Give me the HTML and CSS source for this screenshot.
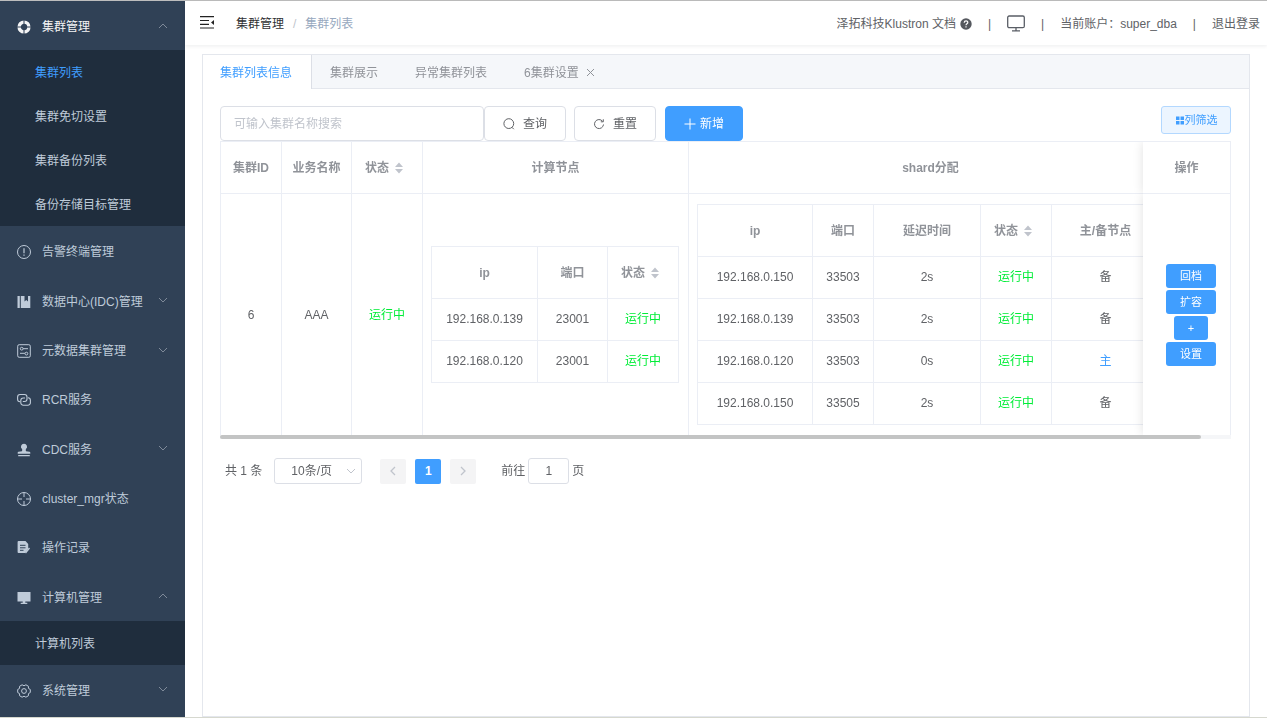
FILE: index.html
```html
<!DOCTYPE html>
<html lang="zh-CN">
<head>
<meta charset="utf-8">
<title>集群列表</title>
<link rel="stylesheet" href="styles.css">
</head>
<body>
<svg class="defs" aria-hidden="true">
  <symbol id="up" viewBox="0 0 10 10"><path d="M1 7l4-4 4 4" fill="none" stroke="currentColor"/></symbol>
  <symbol id="down" viewBox="0 0 10 10"><path d="M1 3l4 4 4-4" fill="none" stroke="currentColor"/></symbol>
  <symbol id="sort" viewBox="0 0 10 14"><path d="M5 1.500l4 4.500H1zM5 12.500l4-4.500H1z" fill="#c0c4cc"/></symbol>
</svg>
<div class="app">
  <nav class="sidebar" aria-label="主菜单">
    <ul class="menu">
      <li class="group">
        <a class="title open" href="#">
          <svg class="icon" viewBox="0 0 14 14"><circle cx="7" cy="7" r="4.900" fill="none" stroke="currentColor" stroke-width="3.400"/><path d="M7 0v4.500M7 9.500v4.500M0 7h4.500M9.500 7H14" stroke="#304156" stroke-width="1"/></svg>
          <span>集群管理</span><svg class="chevron"><use href="#up"/></svg></a>
        <ul class="submenu">
          <li><a class="active" href="#">集群列表</a></li>
          <li><a href="#">集群免切设置</a></li>
          <li><a href="#">集群备份列表</a></li>
          <li><a href="#">备份存储目标管理</a></li>
        </ul>
      </li>
      <li class="group"><a class="title" href="#">
        <svg class="icon" viewBox="0 0 14 14" fill="none" stroke="currentColor"><circle cx="7" cy="7" r="6.500"/><path d="M7 3.200v5" stroke-width="1.200"/><path d="M7 9.500v1.200" stroke-width="1.200"/></svg>
        <span>告警终端管理</span></a></li>
      <li class="group"><a class="title" href="#">
        <svg class="icon" viewBox="0 0 14 14" fill="currentColor"><path d="M.5 1h2.300v12H.5zM3.800 1h3.700v5.500l1.700-1.600L11 6.500V1h2.300v12H3.800z"/></svg>
        <span>数据中心(IDC)管理</span><svg class="chevron"><use href="#down"/></svg></a></li>
      <li class="group"><a class="title" href="#">
        <svg class="icon" viewBox="0 0 14 14" fill="none" stroke="currentColor"><rect x=".7" y=".7" width="12.600" height="12.600" rx="1.500"/><circle cx="4.700" cy="4.700" r="1.400"/><path d="M6.100 4.700H11M3 9.300h4.900"/><circle cx="9.400" cy="9.600" r="1.400"/></svg>
        <span>元数据集群管理</span><svg class="chevron"><use href="#down"/></svg></a></li>
      <li class="group"><a class="title" href="#">
        <svg class="icon" viewBox="0 0 14 14" fill="none" stroke="currentColor" stroke-width="1.100"><path d="M3 8.700A2.500 2.500 0 0 1 .6 6.200V4A2.500 2.500 0 0 1 3 1.500h4.500A2.500 2.500 0 0 1 10 4v2a2.500 2.500 0 0 1-2.500 2.500H5.800"/><path d="M11 4.800A2.500 2.500 0 0 1 13.400 7.300v2.400a2.500 2.500 0 0 1-2.500 2.500H6.300a2.500 2.500 0 0 1-2.500-2.500V7.500a2.500 2.500 0 0 1 2.500-2.500H8"/></svg>
        <span>RCR服务</span></a></li>
      <li class="group"><a class="title" href="#">
        <svg class="icon" viewBox="0 0 14 14" fill="currentColor"><path d="M7 .8a3 3 0 0 1 2 5.300c-.4.500-.3 1.500.1 2.200l3.400.5a1 1 0 0 1 .8 1v1H.7v-1a1 1 0 0 1 .8-1l3.400-.5c.4-.7.500-1.700.1-2.200A3 3 0 0 1 7 .8zM1.200 12h11.600v1.200H1.200z"/></svg>
        <span>CDC服务</span><svg class="chevron"><use href="#down"/></svg></a></li>
      <li class="group"><a class="title" href="#">
        <svg class="icon" viewBox="0 0 14 14" fill="none" stroke="currentColor"><circle cx="7" cy="7" r="6.500"/><path d="M7 .5V5M7 9v4.500M.5 7H5M9 7h4.500"/></svg>
        <span>cluster_mgr状态</span></a></li>
      <li class="group"><a class="title" href="#">
        <svg class="icon" viewBox="0 0 14 14"><path d="M1.500 0h7l2.700 3v5L8 12H1.500A1 1 0 0 1 .6 11V1a1 1 0 0 1 .9-1z" fill="currentColor"/><path d="M3 4.300h5.500M3 6.800h5.500M3 9.300h3.500" stroke="#304156"/><path d="M12.500 7l-4 5" stroke="currentColor" stroke-width="1.300"/></svg>
        <span>操作记录</span></a></li>
      <li class="group">
        <a class="title" href="#">
          <svg class="icon" viewBox="0 0 14 14" fill="currentColor"><path d="M.5 1h13v9.500H.5zM5.700 10.500h2.600v1.300h2v1.100H3.700v-1.100h2z"/></svg>
          <span>计算机管理</span><svg class="chevron"><use href="#up"/></svg></a>
        <ul class="submenu"><li><a href="#">计算机列表</a></li></ul>
      </li>
      <li class="group"><a class="title" href="#">
        <svg class="icon" viewBox="0 0 14 14" fill="none" stroke="currentColor"><path d="M5.100.8Q7 2.800 8.900.8L11.400 2.250Q10.600 4.900 13.300 5.500V8.500Q10.600 9.100 11.400 11.750L8.900 13.200Q7 11.200 5.100 13.200L2.600 11.750Q3.400 9.100.7 8.500V5.500Q3.400 4.900 2.600 2.250z" stroke-linejoin="round"/><circle cx="7" cy="7" r="2.400"/></svg>
        <span>系统管理</span><svg class="chevron"><use href="#down"/></svg></a></li>
    </ul>
  </nav>

  <div class="page">
    <header class="topbar">
      <button class="fold" aria-label="收起菜单"><svg viewBox="0 0 14 13" width="14" height="13" stroke="#222" stroke-width="1.200"><path d="M0 .7h14M0 4.500h9M0 8.300h9M0 12h14"/><path d="M14 4v5l-3-2.500z" fill="#222" stroke="none"/></svg></button>
      <nav class="crumbs" aria-label="位置"><a href="#">集群管理</a><span class="slash">/</span><span class="here">集群列表</span></nav>
      <div class="tools">
        <a class="docs" href="#">泽拓科技Klustron 文档 <svg width="12" height="12" viewBox="0 0 12 12"><circle cx="6" cy="6" r="5.700" fill="#55585e"/><path d="M4.200 4.700C4.300 2.300 7.800 2.400 7.800 4.500 7.800 5.800 6 5.800 6 7.200M6 8.200v1.300" fill="none" stroke="#fff" stroke-width="1.200"/></svg></a>
        <span>|</span>
        <a class="screen" href="#" aria-label="大屏"><svg width="18" height="17" viewBox="0 0 18 17" fill="none" stroke="#5a5e66" stroke-width="1.300"><rect x=".7" y="1" width="16.600" height="11.700" rx="1.500"/><path d="M9 13v2.500M5 15.800h8"/></svg></a>
        <span>|</span>
        <span>当前账户：super_dba</span>
        <span>|</span>
        <a href="#">退出登录</a>
      </div>
    </header>

    <main class="main">
      <section class="card">
        <div class="tabs" role="tablist">
          <button class="tab current" role="tab" aria-selected="true">集群列表信息</button>
          <button class="tab" role="tab">集群展示</button>
          <button class="tab" role="tab">异常集群列表</button>
          <button class="tab" role="tab">6集群设置<svg width="9" height="9" viewBox="0 0 9 9" stroke="currentColor"><path d="M1 1l7 7M8 1L1 8"/></svg></button>
        </div>
        <div class="body">
          <div class="toolbar">
            <input class="search" type="text" placeholder="可输入集群名称搜索" aria-label="集群名称">
            <button class="btn"><svg width="12" height="12" viewBox="0 0 12 12" fill="none" stroke="currentColor"><circle cx="5.800" cy="5.600" r="4.900"/><path d="M8.800 9.200l2 2"/></svg>查询</button>
            <button class="btn reset"><svg width="12" height="12" viewBox="0 0 12 12" fill="none" stroke="currentColor"><path d="M10.500 6.500A4.500 4.500 0 1 1 9.500 3.200M10.300 1.300v2.500H7.800"/></svg>重置</button>
            <button class="btn primary"><svg width="12" height="12" viewBox="0 0 12 12" stroke="currentColor"><path d="M6 .5v11M.5 6h11"/></svg>新增</button>
            <button class="filter"><svg width="10" height="9" viewBox="0 0 10 9" fill="currentColor"><path d="M1 .5h3.500V4H1zM5.500 .5H9V4H5.500zM1 5h3.500v3.500H1zM5.500 5H9v3.500H5.500z"/></svg>列筛选</button>
          </div>

          <div class="scroller">
            <table class="grid outer">
              <colgroup><col class="w61"><col class="w70"><col class="w71"><col class="w266"><col class="w484"><col class="w88"></colgroup>
              <thead><tr><th>集群ID</th><th>业务名称</th><th>状态<svg class="sort"><use href="#sort"/></svg></th><th>计算节点</th><th>shard分配</th><th class="fixed">操作</th></tr></thead>
              <tbody><tr>
                <td>6</td><td>AAA</td><td class="ok">运行中</td>
                <td class="nest">
                  <table class="grid inner">
                    <colgroup><col class="w106"><col class="w70"><col class="w71"></colgroup>
                    <thead><tr><th>ip</th><th>端口</th><th>状态<svg class="sort"><use href="#sort"/></svg></th></tr></thead>
                    <tbody>
                      <tr><td>192.168.0.139</td><td>23001</td><td class="ok">运行中</td></tr>
                      <tr><td>192.168.0.120</td><td>23001</td><td class="ok">运行中</td></tr>
                    </tbody>
                  </table>
                </td>
                <td class="nest">
                  <table class="grid inner">
                    <colgroup><col class="w115"><col class="w61"><col class="w107"><col class="w71"><col class="w108"></colgroup>
                    <thead><tr><th>ip</th><th>端口</th><th>延迟时间</th><th>状态<svg class="sort"><use href="#sort"/></svg></th><th>主/备节点</th></tr></thead>
                    <tbody>
                      <tr><td>192.168.0.150</td><td>33503</td><td>2s</td><td class="ok">运行中</td><td>备</td></tr>
                      <tr><td>192.168.0.139</td><td>33503</td><td>2s</td><td class="ok">运行中</td><td>备</td></tr>
                      <tr><td>192.168.0.120</td><td>33503</td><td>0s</td><td class="ok">运行中</td><td class="master">主</td></tr>
                      <tr><td>192.168.0.150</td><td>33505</td><td>2s</td><td class="ok">运行中</td><td>备</td></tr>
                    </tbody>
                  </table>
                </td>
                <td class="fixed"><div class="actions"><button>回档</button><button>扩容</button><button>+</button><button>设置</button></div></td>
              </tr></tbody>
            </table>
          </div>
          <div class="track"><div class="thumb"></div></div>

          <div class="pager">
            <span class="total">共 1 条</span>
            <span class="size"><select aria-label="每页条数"><option>10条/页</option></select><svg class="arrow"><use href="#down"/></svg></span>
            <div class="pages">
              <button aria-label="上一页"><svg width="10" height="10" viewBox="0 0 10 10" fill="none" stroke="#c0c4cc" stroke-width="1.300"><path d="M7 1L3 5l4 4"/></svg></button>
              <button class="on">1</button>
              <button aria-label="下一页"><svg width="10" height="10" viewBox="0 0 10 10" fill="none" stroke="#c0c4cc" stroke-width="1.300"><path d="M3 1l4 4-4 4"/></svg></button>
            </div>
            <label class="jump">前往<input type="text" value="1">页</label>
          </div>
        </div>
      </section>
    </main>
  </div>
</div>
</body>
</html>
```
FILE: styles.css
```css
* { box-sizing: border-box; }

body {
  margin: 0;
  font: 12px/16px "Liberation Sans", "Noto Sans CJK SC", sans-serif;
  color: #606266;
  background: #fff;
}

button, input, select { font: inherit; color: inherit; margin: 0; }
button { cursor: pointer; }
a { color: inherit; text-decoration: none; }
ul { list-style: none; margin: 0; padding: 0; }
svg { flex: none; }
.defs { display: none; }

.app {
  display: flex;
  min-height: 100vh;
  border-top: 1px solid #bdbdbd;
  border-bottom: 1px solid #d6d8cf;
}

/* Sidebar */
.sidebar {
  display: flex;
  width: 185px;
  flex: none;
  padding-bottom: 3px;
  background: #304156;
  color: #bfcbd9;
}
.menu { display: flex; flex-direction: column; flex: 1; }
.group { display: flex; flex-direction: column; flex: 1 0 auto; }
.title {
  display: flex;
  align-items: center;
  flex: 1 0 auto;
  min-height: 49px;
  padding: 3px 17px 0;
}
.title.open { color: #f4f4f5; }
.title .icon { width: 14px; height: 14px; margin-right: 11px; }
.chevron { width: 10px; height: 10px; margin: 0 0 3px auto; color: #7f8a99; }
.submenu { background: #1f2d3d; }
.submenu a { display: block; padding: 3px 35px 0; line-height: 41px; }
.submenu .active { color: #409eff; }

/* Top bar */
.page { display: flex; flex-direction: column; flex: 1; min-width: 0; }
.topbar {
  display: flex;
  align-items: center;
  height: 44px;
  padding: 0 7px 0 15px;
  box-shadow: 0 1px 4px rgba(0, 21, 41, .08);
}
.fold { display: flex; padding: 0; border: 0; background: none; margin: 0 22px 2px 0; }
.crumbs { display: flex; gap: 9px; padding-top: 2px; color: #303133; }
.slash { color: #c0c4cc; }
.here { color: #97a8be; }
.tools { display: flex; align-items: center; gap: 16px; padding-top: 2px; margin-left: auto; }
.docs { display: flex; align-items: center; gap: 4px; }
.screen { display: flex; padding-bottom: 2px; }

/* Card and tabs */
.main { display: flex; flex: 1; padding: 9px 17px 0; }
.card { flex: 1; min-width: 0; border: 1px solid #e4e7ed; }
.tabs { display: flex; background: #f5f7fa; border-bottom: 1px solid #e4e7ed; }
.tab {
  display: flex;
  align-items: center;
  gap: 7px;
  height: 33px;
  padding: 2px 19px 0 18px;
  border: 0;
  background: none;
  color: #909399;
}
.tab.current {
  height: 34px;
  margin-bottom: -1px;
  padding: 1px 19px 0 17px;
  background: #fff;
  color: #409eff;
  border-right: 1px solid #dcdfe6;
}
.body { padding: 17px 18px 17px 17px; }

/* Toolbar */
.toolbar { display: flex; }
.search {
  width: 264px;
  height: 35px;
  padding: 0 13px;
  border: 1px solid #dcdfe6;
  border-radius: 4px;
  outline: 0;
}
.search::placeholder { color: #c0c4cc; }
.btn {
  display: flex;
  align-items: center;
  justify-content: center;
  gap: 8px;
  width: 82px;
  height: 35px;
  padding: 0;
  border: 1px solid #dcdfe6;
  border-radius: 4px;
  background: #fff;
}
.btn.reset { margin: 0 9px 0 8px; }
.btn.primary { width: 78px; gap: 4px; color: #fff; background: #409eff; border-color: #409eff; }
.filter {
  display: flex;
  align-items: center;
  justify-content: center;
  width: 70px;
  height: 28px;
  margin-left: auto;
  padding: 0;
  font-size: 11px;
  color: #409eff;
  background: #ecf5ff;
  border: 1px solid #b3d8ff;
  border-radius: 3px;
}

/* Tables */
.scroller { overflow-x: auto; scrollbar-width: none; border-left: 1px solid #ebeef5; }
.grid { table-layout: fixed; border-collapse: separate; border-spacing: 0; background: #fff; }
.grid th, .grid td {
  padding: 0;
  text-align: center;
  border-right: 1px solid #ebeef5;
  border-bottom: 1px solid #ebeef5;
}
.grid th { height: 52px; color: #909399; font-weight: bold; }
.grid td { height: 42px; }
.outer { width: 1040px; border-top: 1px solid #ebeef5; }
.outer > tbody > tr > td { border-bottom: 0; }
.outer .nest { padding: 10px 8px; }
.outer .inner td { padding-bottom: 1px; }
.inner { border-top: 1px solid #ebeef5; border-left: 1px solid #ebeef5; }
.sort { width: 10px; height: 14px; margin: 0 5px; vertical-align: -3px; }
.grid .ok { color: #00ed37; }
.grid .master { color: #409eff; }
.grid .fixed {
  position: sticky;
  right: 0;
  background: #fff;
  box-shadow: 0 0 10px rgba(0, 0, 0, .12);
  clip-path: inset(0 0 0 -12px);
}
.w61 { width: 61px; }
.w70 { width: 70px; }
.w71 { width: 71px; }
.w88 { width: 88px; }
.w106 { width: 106px; }
.w107 { width: 107px; }
.w108 { width: 108px; }
.w115 { width: 115px; }
.w266 { width: 266px; }
.w484 { width: 484px; }

.actions { display: flex; flex-direction: column; align-items: center; gap: 2px; padding-left: 9px; }
.actions button {
  height: 24px;
  padding: 0 14px;
  border: 0;
  border-radius: 3px;
  font-size: 11px;
  color: #fff;
  background: #409eff;
}

.track { height: 4px; background: #f5f6f8; }
.thumb { width: 97%; height: 4px; border-radius: 2px; background: #c3c4c4; }

/* Pagination */
.pager { display: flex; align-items: center; margin-top: 19px; padding-left: 5px; }
.total { margin-right: 12px; }
.size { position: relative; }
.size select {
  appearance: none;
  width: 88px;
  height: 26px;
  padding: 0 16px;
  border: 1px solid #dcdfe6;
  border-radius: 3px;
  background: #fff;
}
.size .arrow { position: absolute; right: 6px; top: 8px; width: 10px; height: 10px; color: #c0c4cc; pointer-events: none; }
.pages { display: flex; gap: 9px; margin: 0 25px 0 18px; }
.pages button {
  display: flex;
  align-items: center;
  justify-content: center;
  width: 26px;
  height: 25px;
  padding: 0;
  border: 0;
  border-radius: 2px;
  background: #f4f4f5;
}
.pages .on { background: #409eff; color: #fff; font-weight: bold; }
.jump { display: flex; align-items: center; gap: 3px; }
.jump input {
  width: 41px;
  height: 26px;
  padding: 0;
  text-align: center;
  border: 1px solid #dcdfe6;
  border-radius: 3px;
}
```
